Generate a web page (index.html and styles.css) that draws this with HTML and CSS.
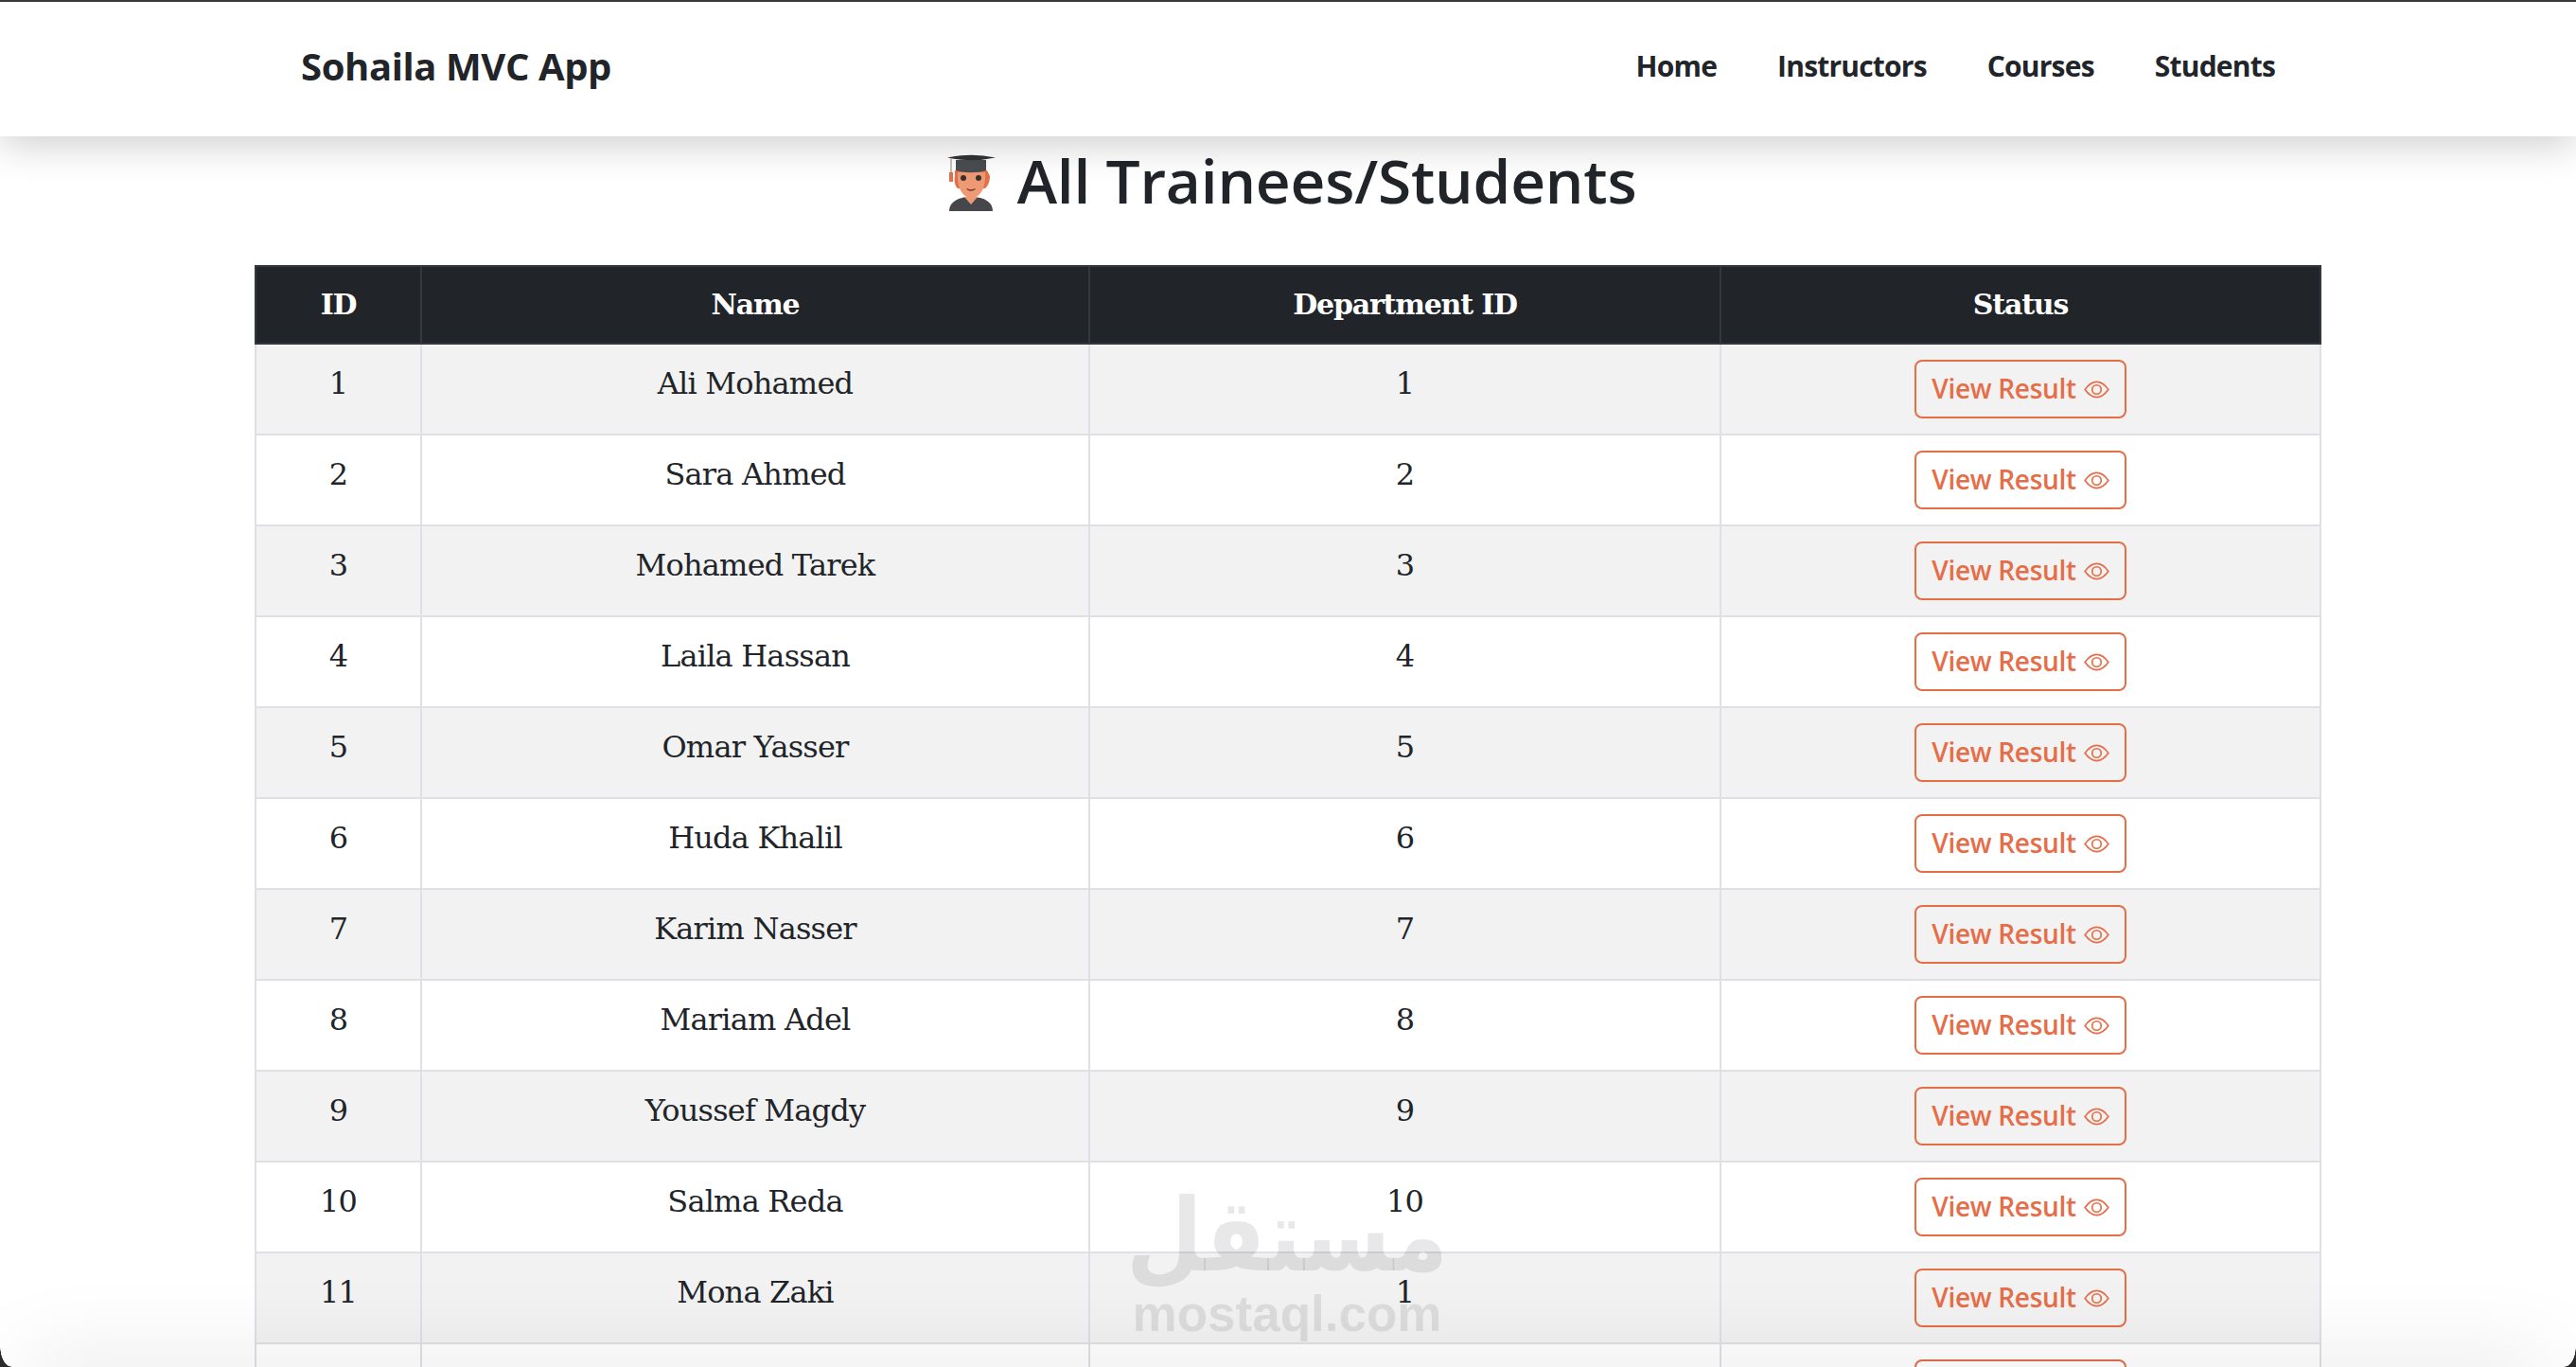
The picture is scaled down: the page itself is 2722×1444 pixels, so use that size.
FILE: index.html
```html
<!doctype html>
<html lang="en">
<head>
	<meta charset="UTF-8" />
	<title>All Trainees/Students</title>
	<link rel="stylesheet" href="styles.css">
</head>
<body>
	<header class="navbar">
		<a href="#" class="brand">Sohaila MVC App</a>
		<nav class="nav-links">
			<a href="#">Home</a>
			<a href="#">Instructors</a>
			<a href="#">Courses</a>
			<a href="#">Students</a>
		</nav>
	</header>
	<main class="content">
		<h2 class="title">
			<svg class="student-icon" viewBox="0 0 52 62" aria-hidden="true">
				<path d="M2 61c0-9 8-15 23-15s23 6 23 15z" fill="#45474a"/>
				<path d="M18 46l7 8 7-8z" fill="#ee9a74"/>
				<path d="M8 18h34l3 6c0 5-2 11-5 13H11c-3-2-4-8-3-13z" fill="#e4704a"/>
				<path d="M11 20h29c1 16-5 27-14.500 27S10 36 11 20z" fill="#ee9a74"/>
				<circle cx="17" cy="26" r="3" fill="#3b2f2b"/>
				<circle cx="33" cy="26" r="3" fill="#3b2f2b"/>
				<path d="M20 37c3 1.500 7 1.500 10 0-1 3.500-9 3.500-10 0z" fill="#7f3325"/>
				<path d="M9 7h32v11c-9 3-23 3-32 0z" fill="#4a4d50"/>
				<path d="M0 4.500Q25-1 51 4.500Q25 10 0 4.500z" fill="#303336"/>
				<path d="M4 5v16" stroke="#b9a89f" stroke-width="1.500" fill="none"/>
				<path d="M2 20h4v10H2z" fill="#e4704a"/>
			</svg>
			All Trainees/Students
		</h2>
		<table class="data-table">
			<colgroup>
				<col class="col-id">
				<col class="col-name">
				<col class="col-dept">
				<col class="col-status">
			</colgroup>
			<thead>
				<tr><th>ID</th><th>Name</th><th>Department ID</th><th>Status</th></tr>
			</thead>
			<tbody>
				<tr><td>1</td><td>Ali Mohamed</td><td>1</td><td class="status"><a href="#" class="btn">View Result<svg class="eye" viewBox="0 0 28 20"><path d="M1 10C6 3 10 1.500 14 1.500S22 3 27 10c-5 7-9 8.500-13 8.500S6 17 1 10z"/><circle cx="14" cy="10" r="5"/></svg></a></td></tr>
				<tr><td>2</td><td>Sara Ahmed</td><td>2</td><td class="status"><a href="#" class="btn">View Result<svg class="eye" viewBox="0 0 28 20"><path d="M1 10C6 3 10 1.500 14 1.500S22 3 27 10c-5 7-9 8.500-13 8.500S6 17 1 10z"/><circle cx="14" cy="10" r="5"/></svg></a></td></tr>
				<tr><td>3</td><td>Mohamed Tarek</td><td>3</td><td class="status"><a href="#" class="btn">View Result<svg class="eye" viewBox="0 0 28 20"><path d="M1 10C6 3 10 1.500 14 1.500S22 3 27 10c-5 7-9 8.500-13 8.500S6 17 1 10z"/><circle cx="14" cy="10" r="5"/></svg></a></td></tr>
				<tr><td>4</td><td>Laila Hassan</td><td>4</td><td class="status"><a href="#" class="btn">View Result<svg class="eye" viewBox="0 0 28 20"><path d="M1 10C6 3 10 1.500 14 1.500S22 3 27 10c-5 7-9 8.500-13 8.500S6 17 1 10z"/><circle cx="14" cy="10" r="5"/></svg></a></td></tr>
				<tr><td>5</td><td>Omar Yasser</td><td>5</td><td class="status"><a href="#" class="btn">View Result<svg class="eye" viewBox="0 0 28 20"><path d="M1 10C6 3 10 1.500 14 1.500S22 3 27 10c-5 7-9 8.500-13 8.500S6 17 1 10z"/><circle cx="14" cy="10" r="5"/></svg></a></td></tr>
				<tr><td>6</td><td>Huda Khalil</td><td>6</td><td class="status"><a href="#" class="btn">View Result<svg class="eye" viewBox="0 0 28 20"><path d="M1 10C6 3 10 1.500 14 1.500S22 3 27 10c-5 7-9 8.500-13 8.500S6 17 1 10z"/><circle cx="14" cy="10" r="5"/></svg></a></td></tr>
				<tr><td>7</td><td>Karim Nasser</td><td>7</td><td class="status"><a href="#" class="btn">View Result<svg class="eye" viewBox="0 0 28 20"><path d="M1 10C6 3 10 1.500 14 1.500S22 3 27 10c-5 7-9 8.500-13 8.500S6 17 1 10z"/><circle cx="14" cy="10" r="5"/></svg></a></td></tr>
				<tr><td>8</td><td>Mariam Adel</td><td>8</td><td class="status"><a href="#" class="btn">View Result<svg class="eye" viewBox="0 0 28 20"><path d="M1 10C6 3 10 1.500 14 1.500S22 3 27 10c-5 7-9 8.500-13 8.500S6 17 1 10z"/><circle cx="14" cy="10" r="5"/></svg></a></td></tr>
				<tr><td>9</td><td>Youssef Magdy</td><td>9</td><td class="status"><a href="#" class="btn">View Result<svg class="eye" viewBox="0 0 28 20"><path d="M1 10C6 3 10 1.500 14 1.500S22 3 27 10c-5 7-9 8.500-13 8.500S6 17 1 10z"/><circle cx="14" cy="10" r="5"/></svg></a></td></tr>
				<tr><td>10</td><td>Salma Reda</td><td>10</td><td class="status"><a href="#" class="btn">View Result<svg class="eye" viewBox="0 0 28 20"><path d="M1 10C6 3 10 1.500 14 1.500S22 3 27 10c-5 7-9 8.500-13 8.500S6 17 1 10z"/><circle cx="14" cy="10" r="5"/></svg></a></td></tr>
				<tr><td>11</td><td>Mona Zaki</td><td>1</td><td class="status"><a href="#" class="btn">View Result<svg class="eye" viewBox="0 0 28 20"><path d="M1 10C6 3 10 1.500 14 1.500S22 3 27 10c-5 7-9 8.500-13 8.500S6 17 1 10z"/><circle cx="14" cy="10" r="5"/></svg></a></td></tr>
				<tr><td></td><td></td><td></td><td class="status"><a href="#" class="btn">View Result<svg class="eye" viewBox="0 0 28 20"><path d="M1 10C6 3 10 1.500 14 1.500S22 3 27 10c-5 7-9 8.500-13 8.500S6 17 1 10z"/><circle cx="14" cy="10" r="5"/></svg></a></td></tr>
			</tbody>
		</table>
	</main>
	<div class="watermark">
		<span class="wm-ar" lang="ar" dir="rtl">مستقل</span>
		<span class="wm-en">mostaql.com</span>
	</div>
	<div class="bottom-shade"></div>
	<div class="corner corner-left"></div>
	<div class="corner corner-right"></div>
</body>
</html>
```

FILE: styles.css
```css
*{
	margin: 0;
	padding: 0;
	box-sizing: border-box;
}
html,body{
	height: 1444px;
	overflow: hidden;
	background: #fff;
}
body{
	border-top: 2px solid #3a3a3a;
	color: #212529;
	font-family: "DejaVu Serif", serif;
}
a{
	text-decoration: none;
	color: inherit;
}
.navbar{
	position: relative;
	z-index: 2;
	height: 142px;
	padding: 0 318px 7px;
	display: flex;
	align-items: center;
	justify-content: space-between;
	background: #fff;
	box-shadow: 0 8px 40px rgba(0,0,0,.2);
	font-family: "Open Sans", sans-serif;
}
.brand{
	font-size: 40px;
	font-weight: 700;
	letter-spacing: -.4px;
}
.nav-links{
	display: flex;
	gap: 64px;
	font-size: 30px;
	font-weight: 700;
	letter-spacing: -.8px;
}
.content{
	padding: 0 269px;
}
.title{
	height: 136px;
	padding: 9px 0 0 8px;
	display: flex;
	justify-content: center;
	align-items: flex-start;
	gap: 22px;
	font-family: "Open Sans", sans-serif;
	font-size: 64px;
	font-weight: 600;
	line-height: 76px;
	letter-spacing: -.2px;
}
.student-icon{
	width: 52px;
	height: 62px;
	margin-top: 9px;
}
.data-table{
	width: 2182px;
	table-layout: fixed;
	border-collapse: collapse;
	text-align: center;
	font-size: 32px;
	line-height: 48px;
	letter-spacing: -.8px;
}
.col-id{ width: 175px; }
.col-name{ width: 706px; }
.col-dept{ width: 667px; }
.col-status{ width: 634px; }
.data-table th,.data-table td{
	padding: 17px 16px 15px;
	border: 2px solid #dfe0e5;
	vertical-align: top;
	font-weight: 400;
}
.data-table th{
	padding: 16px;
	background: #212529;
	border-color: #32383e;
	color: #fff;
	font-size: 30px;
	font-weight: 700;
	letter-spacing: -1.2px;
}
.data-table td.status{
	padding: 16px;
	letter-spacing: normal;
}
.data-table tbody tr:nth-child(odd) td{
	background: #f2f2f2;
}
.btn{
	display: inline-flex;
	align-items: center;
	gap: 8px;
	height: 62px;
	padding: 0 16px 3px;
	border: 2px solid #e56d47;
	border-radius: 8px;
	color: #e56d47;
	font-family: "Open Sans", sans-serif;
	font-size: 28px;
	font-weight: 600;
	line-height: 42px;
	letter-spacing: -.3px;
}
.eye{
	width: 27px;
	height: 19px;
	margin-top: 3px;
	fill: none;
	stroke: #e56d47;
	stroke-width: 1.800;
}
.watermark{
	position: fixed;
	left: 1197px;
	top: 1250px;
	width: 326px;
	display: flex;
	flex-direction: column;
	align-items: center;
	color: rgba(0,0,0,.09);
	pointer-events: none;
	z-index: 3;
}
.wm-ar{
	font-family: "DejaVu Sans", sans-serif;
	font-size: 93px;
	font-weight: 700;
	line-height: 110px;
	transform: scaleY(1.150);
}
.wm-en{
	font-family: "Liberation Sans", sans-serif;
	font-size: 53px;
	font-weight: 700;
	line-height: 56px;
}
.bottom-shade{
	position: fixed;
	left: 30px;
	right: 30px;
	bottom: -26px;
	height: 20px;
	z-index: 4;
	box-shadow: 0 0 90px rgba(0,0,0,.25);
	pointer-events: none;
}
.corner{
	position: fixed;
	bottom: 0;
	width: 12px;
	height: 22px;
	z-index: 5;
}
.corner-left{
	left: 0;
	background: radial-gradient(ellipse 12px 22px at 100% 0, transparent 96%, #2b2b2b 100%);
}
.corner-right{
	right: 0;
	background: radial-gradient(ellipse 12px 22px at 0 0, transparent 96%, #2b2b2b 100%);
}
```
